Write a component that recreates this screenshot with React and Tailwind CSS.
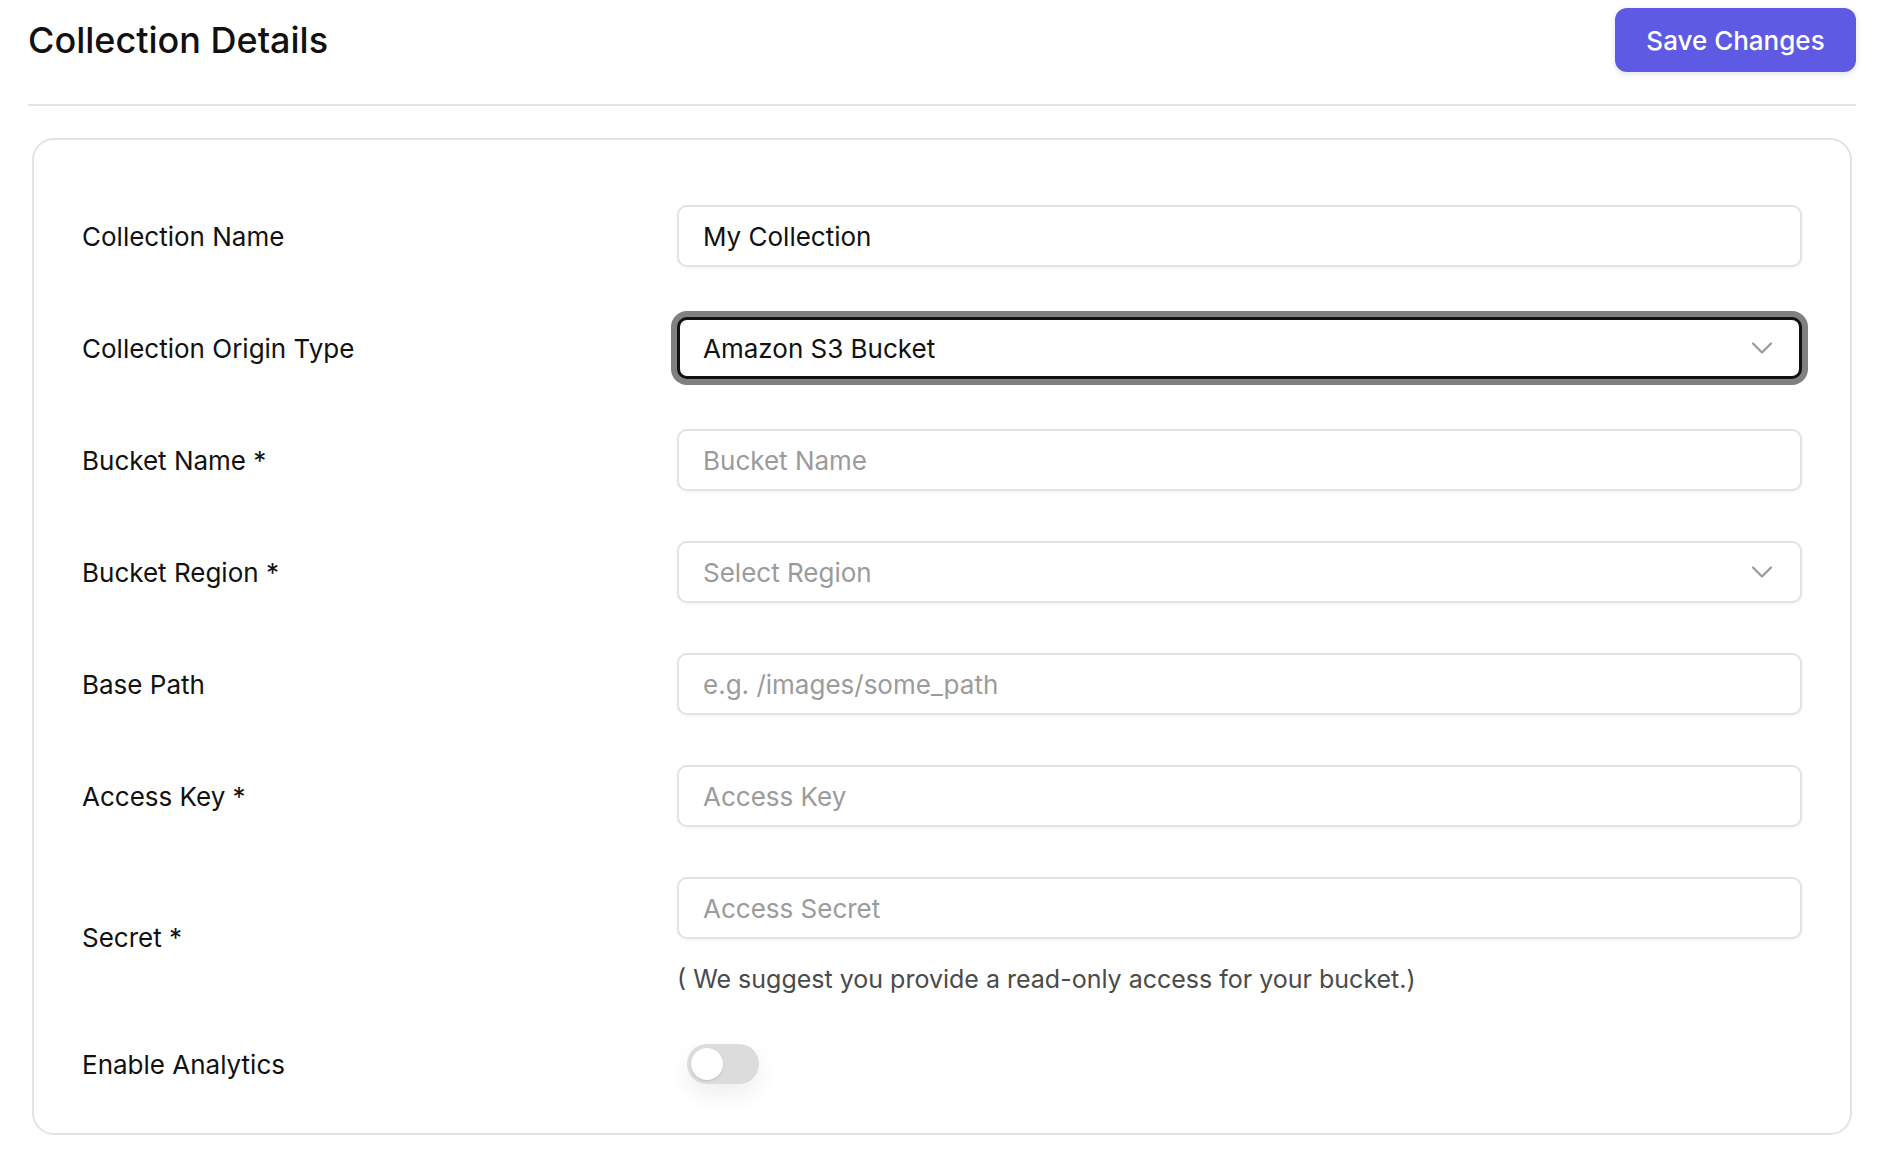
import React, { useState } from 'react'
import { ChevronDown } from 'lucide-react'

const inputCls =
  "h-[62px] w-full rounded-[10px] border-2 border-[#e3e3e3] bg-white px-6 text-[26px] text-[#111] placeholder:text-[#9b9b9b] shadow-[0_1px_3px_rgba(0,0,0,0.06)] outline-none"

const Row = ({ label, children, className = '' }) => (
  <div className={`flex items-center ${className}`}>
    <div className="w-[595px] shrink-0 text-[26px] text-[#111]">{label}</div>
    <div className="flex-1">{children}</div>
  </div>
)

const App = () => {
  const [name, setName] = useState('My Collection')
  const [analytics, setAnalytics] = useState(false)

  return (
    <div className="min-h-screen bg-white pl-[28px] pr-[24px] pt-2 font-['Inter',sans-serif]">
      <div className="flex items-center justify-between">
        <h1 className="text-[36px] font-medium text-[#111]">Collection Details</h1>
        <button className="h-16 w-[241px] rounded-xl bg-[#5e5ae3] text-[26px] font-medium text-white shadow-[0_2px_6px_rgba(0,0,0,0.12)]">
          Save Changes
        </button>
      </div>
      <div className="mt-8 h-[2px] bg-[#e3e3e3]" />

      <div className="mx-[4px] mt-8 rounded-[22px] border-2 border-[#e3e3e3] px-12 pt-[65px] pb-[49px]">
        <div className="flex flex-col gap-[50px]">
          <Row label="Collection Name">
            <input className={inputCls} value={name} onChange={(e) => setName(e.target.value)} />
          </Row>
          <Row label="Collection Origin Type">
            <div className="flex h-[62px] w-full items-center justify-between rounded-[10px] border-[3px] border-[#111] bg-white pl-[23px] pr-[19px] text-[26px] text-[#111] ring-[6px] ring-[#808080]">
              <span>Amazon S3 Bucket</span>
              <ChevronDown size={36} strokeWidth={1.5} color="#9a9a9a" />
            </div>
          </Row>
          <Row label="Bucket Name *">
            <input className={inputCls} placeholder="Bucket Name" />
          </Row>
          <Row label="Bucket Region *">
            <div className="flex h-[62px] w-full items-center justify-between rounded-[10px] border-2 border-[#e3e3e3] bg-white pl-6 pr-5 text-[26px] text-[#9b9b9b] shadow-[0_1px_3px_rgba(0,0,0,0.06)]">
              <span>Select Region</span>
              <ChevronDown size={36} strokeWidth={1.5} color="#9a9a9a" />
            </div>
          </Row>
          <Row label="Base Path">
            <input className={inputCls} placeholder="e.g. /images/some_path" />
          </Row>
          <Row label="Access Key *">
            <input className={inputCls} placeholder="Access Key" />
          </Row>
          <Row label="Secret *">
            <input className={inputCls} placeholder="Access Secret" />
            <p className="mt-[22px] text-[25px] leading-[36px] text-[#4a4a4a]">
              ( We suggest you provide a read-only access for your bucket.)
            </p>
          </Row>
          <Row label="Enable Analytics" className="-mt-[3px]">
            <button
              onClick={() => setAnalytics(!analytics)}
              className={`ml-[10px] flex h-10 w-[72px] items-center rounded-full p-1 shadow-[0_10px_24px_rgba(0,0,0,0.07)] ${analytics ? 'justify-end bg-[#5e5ae3]' : 'justify-start bg-[#dcdcdc]'}`}
            >
              <span className="h-8 w-8 rounded-full bg-white shadow-[0_1px_2px_rgba(0,0,0,0.15)]" />
            </button>
          </Row>
        </div>
      </div>
    </div>
  )
}

export default App
